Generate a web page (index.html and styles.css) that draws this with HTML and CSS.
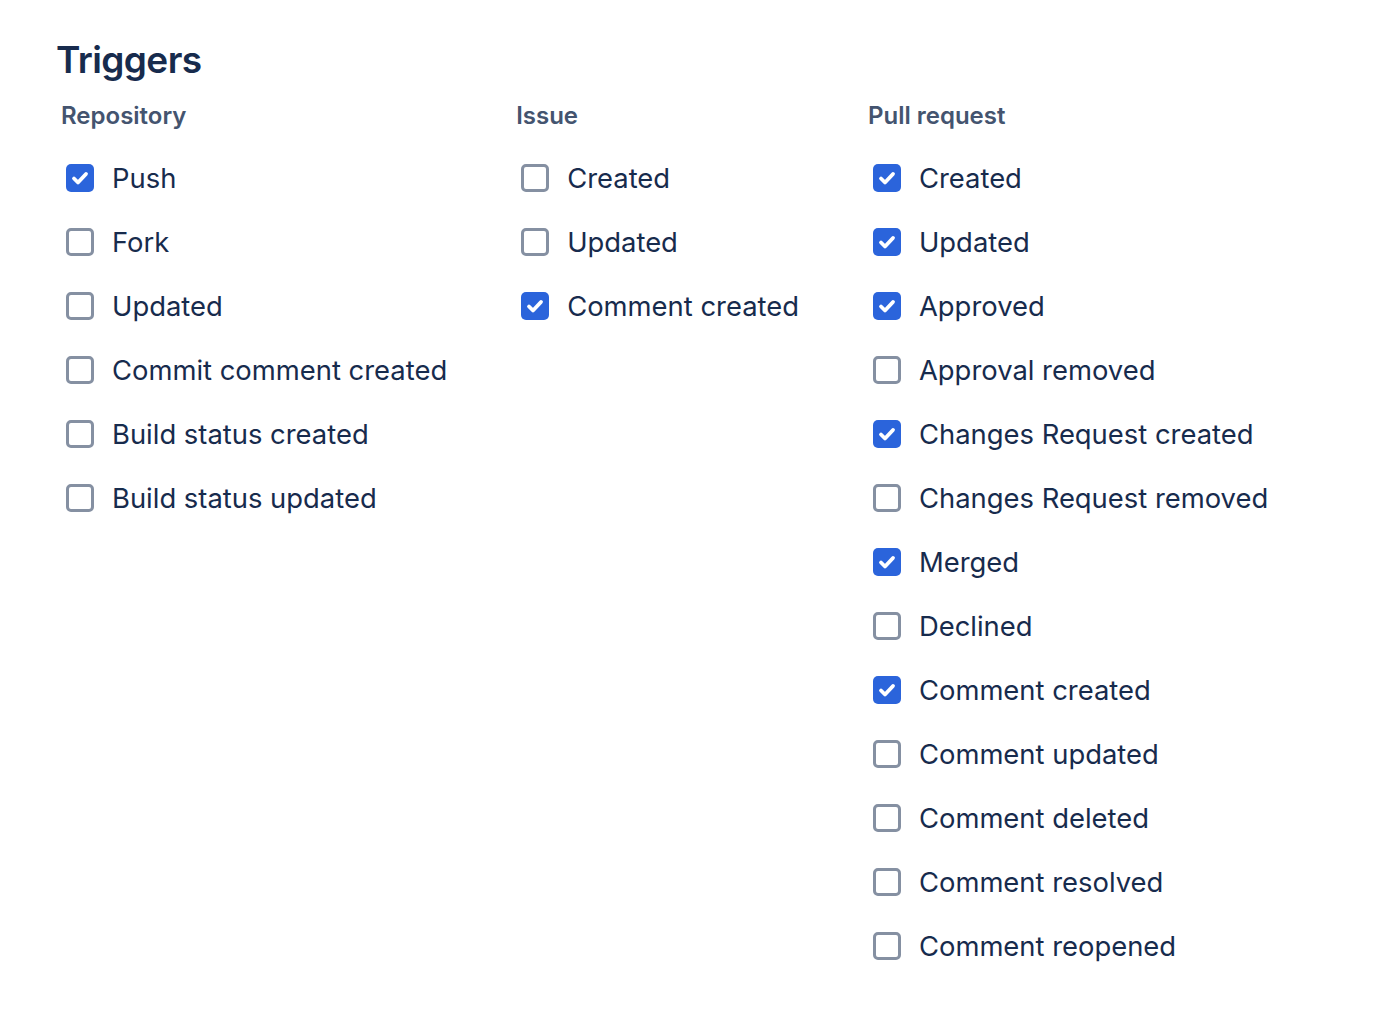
FILE: index.html
```html
<!DOCTYPE html>
<html>
<head>
<meta charset="utf-8">
<link rel="stylesheet" href="styles.css">
</head>
<body>
<div class="page">
  <h1 class="title">Triggers</h1>
  <div class="columns">
    <div class="col">
      <h2 class="col-head">Repository</h2>
      <ul class="list">
        <li class="item"><span class="box checked"><svg viewBox="0 0 28 28"><path d="M8 14.5l4 4 8-8.5"/></svg></span><span class="label">Push</span></li>
        <li class="item"><span class="box"></span><span class="label">Fork</span></li>
        <li class="item"><span class="box"></span><span class="label">Updated</span></li>
        <li class="item"><span class="box"></span><span class="label">Commit comment created</span></li>
        <li class="item"><span class="box"></span><span class="label">Build status created</span></li>
        <li class="item"><span class="box"></span><span class="label">Build status updated</span></li>
      </ul>
    </div>
    <div class="col">
      <h2 class="col-head">Issue</h2>
      <ul class="list">
        <li class="item"><span class="box"></span><span class="label">Created</span></li>
        <li class="item"><span class="box"></span><span class="label">Updated</span></li>
        <li class="item"><span class="box checked"><svg viewBox="0 0 28 28"><path d="M8 14.5l4 4 8-8.5"/></svg></span><span class="label">Comment created</span></li>
      </ul>
    </div>
    <div class="col">
      <h2 class="col-head">Pull request</h2>
      <ul class="list">
        <li class="item"><span class="box checked"><svg viewBox="0 0 28 28"><path d="M8 14.5l4 4 8-8.5"/></svg></span><span class="label">Created</span></li>
        <li class="item"><span class="box checked"><svg viewBox="0 0 28 28"><path d="M8 14.5l4 4 8-8.5"/></svg></span><span class="label">Updated</span></li>
        <li class="item"><span class="box checked"><svg viewBox="0 0 28 28"><path d="M8 14.5l4 4 8-8.5"/></svg></span><span class="label">Approved</span></li>
        <li class="item"><span class="box"></span><span class="label">Approval removed</span></li>
        <li class="item"><span class="box checked"><svg viewBox="0 0 28 28"><path d="M8 14.5l4 4 8-8.5"/></svg></span><span class="label">Changes Request created</span></li>
        <li class="item"><span class="box"></span><span class="label">Changes Request removed</span></li>
        <li class="item"><span class="box checked"><svg viewBox="0 0 28 28"><path d="M8 14.5l4 4 8-8.5"/></svg></span><span class="label">Merged</span></li>
        <li class="item"><span class="box"></span><span class="label">Declined</span></li>
        <li class="item"><span class="box checked"><svg viewBox="0 0 28 28"><path d="M8 14.5l4 4 8-8.5"/></svg></span><span class="label">Comment created</span></li>
        <li class="item"><span class="box"></span><span class="label">Comment updated</span></li>
        <li class="item"><span class="box"></span><span class="label">Comment deleted</span></li>
        <li class="item"><span class="box"></span><span class="label">Comment resolved</span></li>
        <li class="item"><span class="box"></span><span class="label">Comment reopened</span></li>
      </ul>
    </div>
  </div>
</div>
</body>
</html>
```

FILE: styles.css
```css
html, body {
  margin: 0;
  padding: 0;
  background: #ffffff;
}
body {
  font-family: Inter, "Noto Sans", sans-serif;
  color: #172B4D;
}
.page {
  padding: 36px 0 0 56px;
}
.title {
  margin: 0;
  font-size: 37px;
  font-weight: 600;
  line-height: 48px;
  letter-spacing: -0.6px;
  color: #172B4D;
}
.columns {
  display: flex;
  gap: 69px;
  margin-top: 16px;
  padding-left: 5px;
}
.col {
  display: flex;
  flex-direction: column;
}
.col-head {
  margin: 0;
  font-size: 24px;
  font-weight: 600;
  line-height: 32px;
  color: #44546F;
}
.list {
  list-style: none;
  margin: 26px 0 0 0;
  padding: 0;
  display: flex;
  flex-direction: column;
  gap: 24px;
}
.item {
  display: flex;
  align-items: center;
  height: 40px;
}
.box {
  box-sizing: border-box;
  width: 28px;
  height: 28px;
  margin-left: 5px;
  margin-right: 18px;
  border: 3px solid #8590A2;
  border-radius: 5px;
  background: #ffffff;
  flex: none;
  display: flex;
}
.box.checked {
  border: none;
  background: #2B64DB;
}
.box svg {
  width: 28px;
  height: 28px;
}
.box svg path {
  fill: none;
  stroke: #ffffff;
  stroke-width: 3.8;
  stroke-linecap: round;
  stroke-linejoin: round;
}
.label {
  font-size: 27.4px;
  line-height: 40px;
  color: #172B4D;
  white-space: nowrap;
}
```
